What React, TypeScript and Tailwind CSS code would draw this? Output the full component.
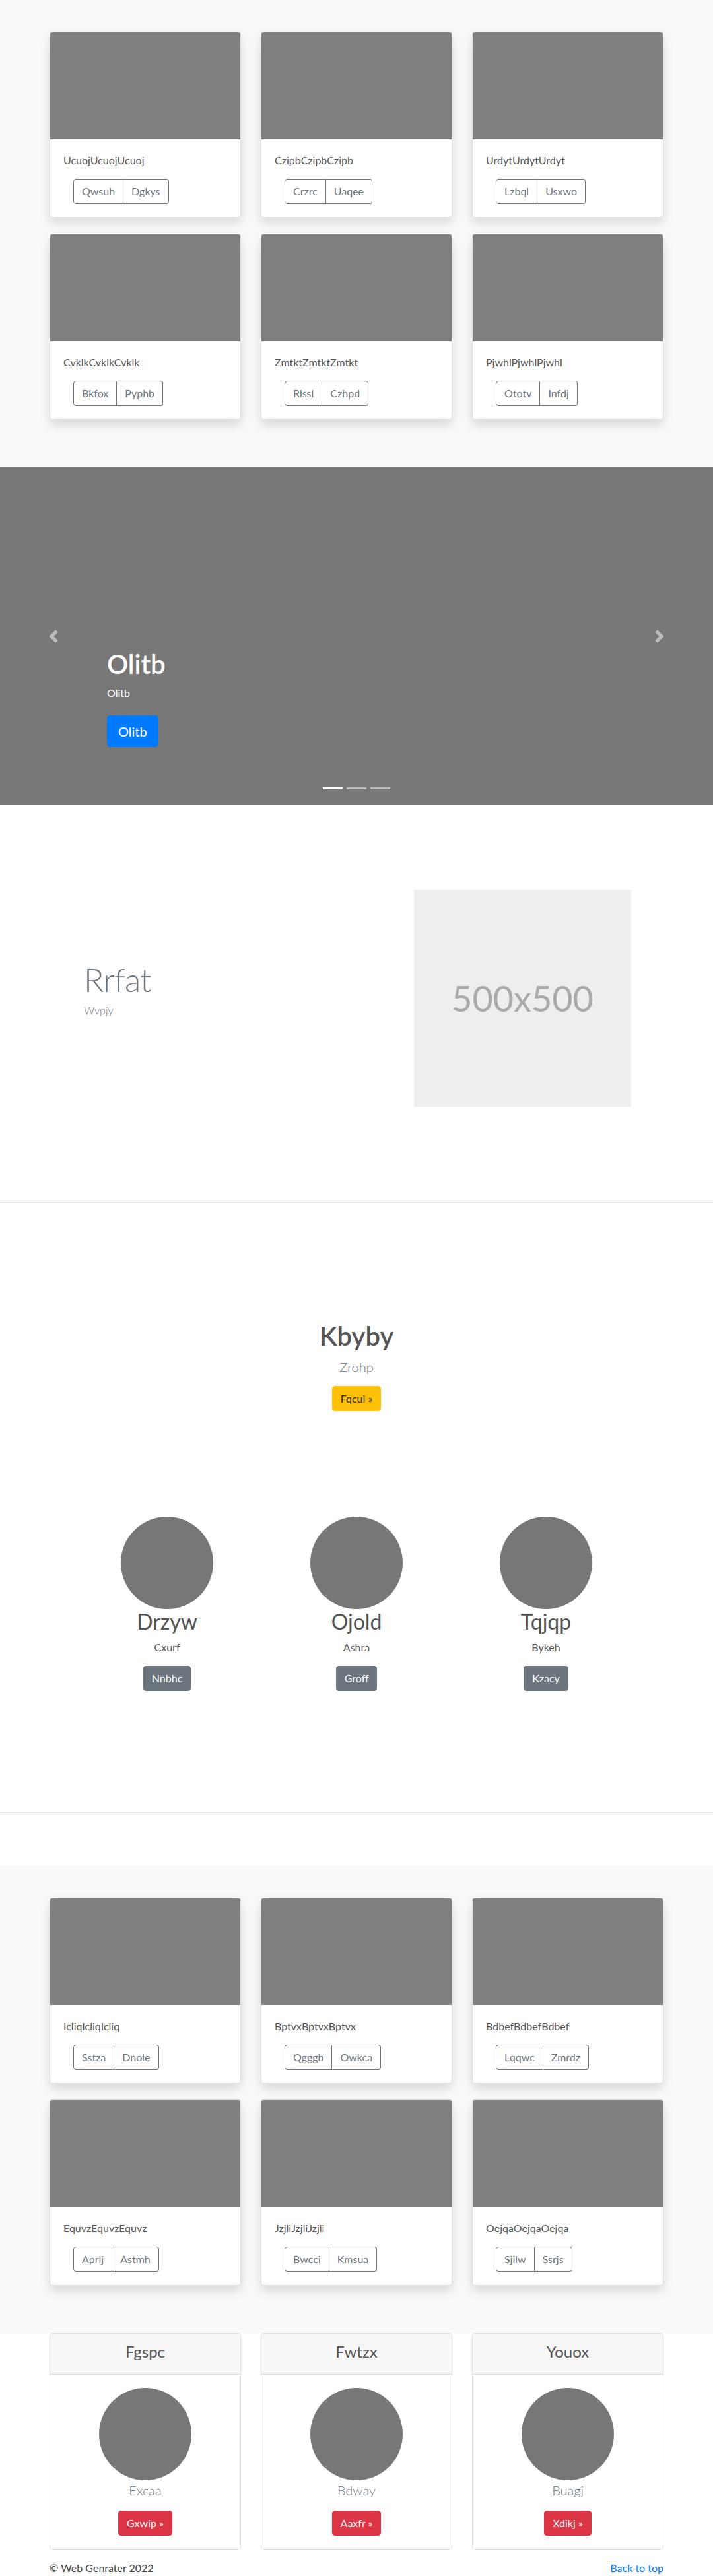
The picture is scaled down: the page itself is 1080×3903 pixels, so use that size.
const albumTop = [
  { title: 'UcuojUcuojUcuoj', a: 'Qwsuh', b: 'Dgkys' },
  { title: 'CzipbCzipbCzipb', a: 'Crzrc', b: 'Uaqee' },
  { title: 'UrdytUrdytUrdyt', a: 'Lzbql', b: 'Usxwo' },
  { title: 'CvklkCvklkCvklk', a: 'Bkfox', b: 'Pyphb' },
  { title: 'ZmtktZmtktZmtkt', a: 'Rlssl', b: 'Czhpd' },
  { title: 'PjwhlPjwhlPjwhl', a: 'Ototv', b: 'Infdj' },
]

const albumBottom = [
  { title: 'IcliqIcliqIcliq', a: 'Sstza', b: 'Dnole' },
  { title: 'BptvxBptvxBptvx', a: 'Qgggb', b: 'Owkca' },
  { title: 'BdbefBdbefBdbef', a: 'Lqqwc', b: 'Zmrdz' },
  { title: 'EquvzEquvzEquvz', a: 'Aprlj', b: 'Astmh' },
  { title: 'JzjliJzjliJzjli', a: 'Bwcci', b: 'Kmsua' },
  { title: 'OejqaOejqaOejqa', a: 'Sjilw', b: 'Ssrjs' },
]

const team = [
  { name: 'Drzyw', sub: 'Cxurf', btn: 'Nnbhc' },
  { name: 'Ojold', sub: 'Ashra', btn: 'Groff' },
  { name: 'Tqjqp', sub: 'Bykeh', btn: 'Kzacy' },
]

const pricing = [
  { title: 'Fgspc', sub: 'Excaa', btn: 'Gxwip »' },
  { title: 'Fwtzx', sub: 'Bdway', btn: 'Aaxfr »' },
  { title: 'Youox', sub: 'Buagj', btn: 'Xdikj »' },
]

type AlbumItem = { title: string; a: string; b: string }

const AlbumCard = ({ item }: { item: AlbumItem }) => (
  <div className="bg-white border border-black/[.125] rounded overflow-hidden shadow-[0_8px_16px_rgba(0,0,0,0.13)]">
    <div className="h-[162px] bg-[#808080]" />
    <div className="p-5">
      <p className="text-[16px] leading-6 text-[#555] mb-4">{item.title}</p>
      <div className="ml-[15px] inline-flex">
        <button className="px-3 py-1.5 text-[16px] leading-6 text-[#6c757d] border border-[#6c757d] rounded-l">
          {item.a}
        </button>
        <button className="px-3 py-1.5 text-[16px] leading-6 text-[#6c757d] border border-l-0 border-[#6c757d] rounded-r">
          {item.b}
        </button>
      </div>
    </div>
  </div>
)

const Album = ({ items }: { items: AlbumItem[] }) => (
  <section className="bg-[#f8f9fa] pt-12 pb-[72px]">
    <div className="w-[930px] mx-auto grid grid-cols-3 gap-x-[30px] gap-y-6">
      {items.map((item) => (
        <AlbumCard key={item.title} item={item} />
      ))}
    </div>
  </section>
)

const Chevron = ({ dir }: { dir: 'prev' | 'next' }) => (
  <svg width="20" height="20" viewBox="0 0 8 8" className="opacity-50">
    {dir === 'prev' ? (
      <path fill="#fff" d="M5.25 0l-4 4 4 4 1.5-1.5-2.5-2.5 2.5-2.5-1.5-1.5z" />
    ) : (
      <path fill="#fff" d="M2.75 0l-1.5 1.5 2.5 2.5-2.5 2.5 1.5 1.5 4-4-4-4z" />
    )}
  </svg>
)

const Carousel = () => (
  <div className="relative h-[512px] bg-[#777] overflow-hidden">
    <div className="absolute left-0 top-0 bottom-0 w-[15%] flex items-center justify-center">
      <Chevron dir="prev" />
    </div>
    <div className="absolute right-0 top-0 bottom-0 w-[15%] flex items-center justify-center">
      <Chevron dir="next" />
    </div>

    {/* caption */}
    <div className="absolute left-[162px] top-[274px] text-white">
      <h1 className="text-[40px] leading-[48px] font-semibold mb-2">Olitb</h1>
      <p className="text-[16px] leading-6 mb-[22px]">Olitb</p>
      <a className="inline-block bg-[#007bff] text-white text-[20px] leading-[30px] px-4 py-2 border border-[#007bff] rounded-[5px]">
        Olitb
      </a>
    </div>

    {/* indicators */}
    <div className="absolute left-0 right-0 bottom-[24px] flex justify-center">
      <span className="w-[30px] h-[3px] mx-[3px] bg-white" />
      <span className="w-[30px] h-[3px] mx-[3px] bg-white/50" />
      <span className="w-[30px] h-[3px] mx-[3px] bg-white/50" />
    </div>
  </div>
)

const Featurette = () => (
  <section className="pt-[128px] pb-[144px]">
    <div className="w-[860px] mx-auto flex items-start">
      <div className="flex-1 pl-[17px] mt-[111px]">
        <h2 className="text-[50px] leading-[50px] font-light tracking-[-0.8px] text-[#6c757d] mb-[10px]">Rrfat</h2>
        <p className="text-[16px] leading-6 font-light text-[#6c757d]">Wvpjy</p>
      </div>
      <div className="w-[329px] h-[329px] mr-[14px] bg-[#eee] flex items-center justify-center">
        <span className="text-[54px] text-[#aaa]">500x500</span>
      </div>
    </div>
  </section>
)

const Marketing = () => (
  <section className="pt-[178px] pb-[184px]">
    <div className="text-center">
      <h1 className="text-[40px] leading-[48px] font-semibold text-[#555] mb-2">Kbyby</h1>
      <p className="text-[20px] leading-[30px] font-light text-[#6c757d] mb-[14px]">Zrohp</p>
      <a className="inline-block bg-[#ffc107] text-[#212529] text-[16px] leading-6 px-3 py-1.5 border border-[#ffc107] rounded">
        Fqcui »
      </a>
    </div>

    <div className="w-[861px] mx-auto mt-[160px] grid grid-cols-3">
      {team.map((t) => (
        <div key={t.name} className="flex flex-col items-center text-center">
          <div className="w-[140px] h-[140px] rounded-full bg-[#777]" />
          <h2 className="text-[32px] leading-[38px] text-[#555] mb-2">{t.name}</h2>
          <p className="text-[16px] leading-6 text-[#555] mb-4">{t.sub}</p>
          <a className="inline-block bg-[#6c757d] text-white text-[16px] leading-6 px-3 py-1.5 border border-[#6c757d] rounded">
            {t.btn}
          </a>
        </div>
      ))}
    </div>
  </section>
)

const Pricing = () => (
  <section className="w-[930px] mx-auto grid grid-cols-3 gap-x-[30px]">
    {pricing.map((p) => (
      <div key={p.title} className="border border-black/[.125] rounded overflow-hidden text-center">
        <div className="bg-[#f7f7f7] border-b border-black/[.125] px-5 py-3">
          <h4 className="text-[24px] leading-[29px] text-[#555] mb-2">{p.title}</h4>
        </div>
        <div className="p-5 flex flex-col items-center">
          <div className="w-[140px] h-[140px] rounded-full bg-[#777]" />
          <p className="text-[20px] leading-[30px] font-light text-[#6c757d] mb-4">{p.sub}</p>
          <a className="inline-block bg-[#dc3545] text-white text-[16px] leading-6 px-3 py-1.5 border border-[#dc3545] rounded">
            {p.btn}
          </a>
        </div>
      </div>
    ))}
  </section>
)

const Footer = () => (
  <footer className="w-[930px] mx-auto pt-4 flex justify-between text-[16px] leading-6">
    <p className="text-[#444]">© Web Genrater 2022</p>
    <a className="text-[#007bff]">Back to top</a>
  </footer>
)

export default function App() {
  return (
    <div className="w-[1080px] bg-white font-['Segoe_UI',Lato,'Open_Sans',sans-serif]">
      <Album items={albumTop} />
      <Carousel />
      <Featurette />
      <hr className="border-0 border-t border-black/10" />
      <Marketing />
      <hr className="border-0 border-t border-black/10" />
      <div className="mt-20">
        <Album items={albumBottom} />
      </div>
      <Pricing />
      <Footer />
    </div>
  )
}
